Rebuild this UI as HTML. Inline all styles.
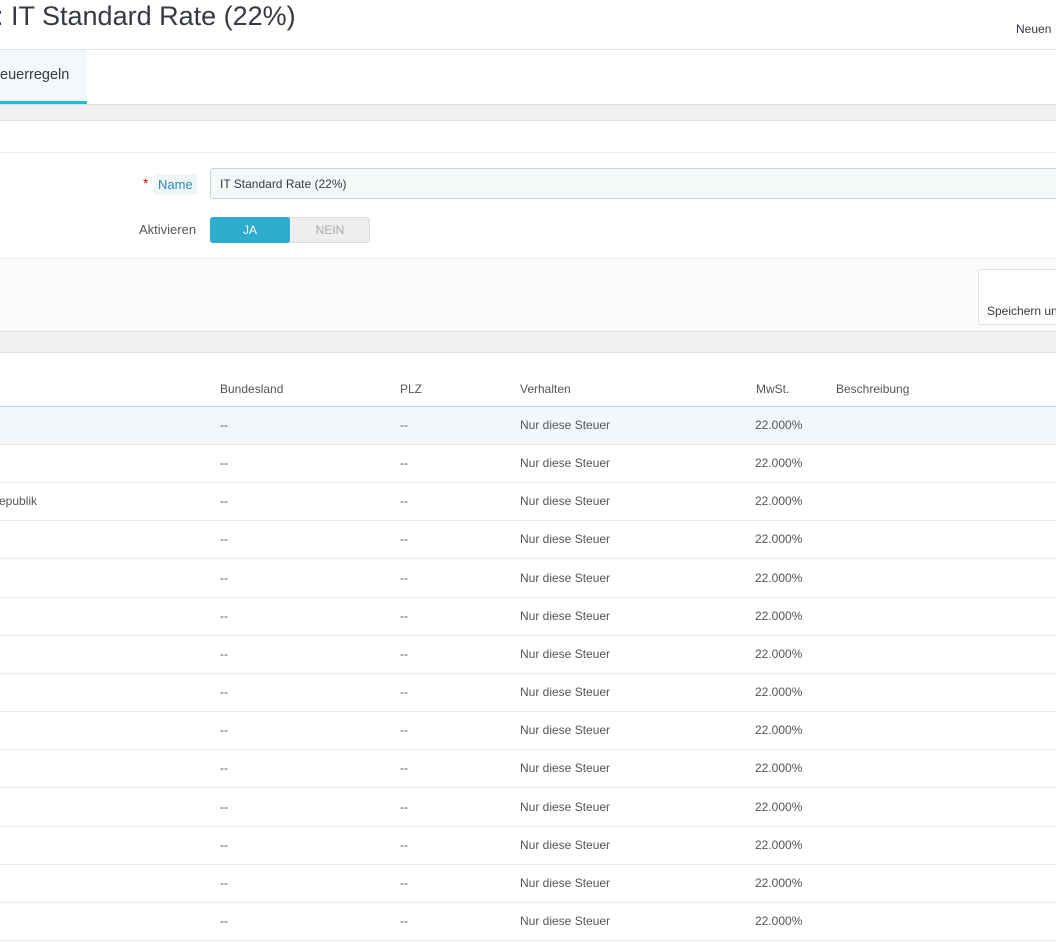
<!DOCTYPE html>
<html><head><meta charset="utf-8"><style>
*{margin:0;padding:0;box-sizing:border-box}
html,body{width:1056px;height:948px;overflow:hidden}
body{background:#fff;font-family:"Liberation Sans",sans-serif;color:#555;position:relative}
.a{position:absolute;white-space:nowrap}
.t{font-size:12px;color:#555}
.r{position:absolute;left:0;width:1056px;height:38px;border-bottom:1px solid #e8eaeb}
.r span{position:absolute;top:11px;font-size:12px;color:#555;white-space:nowrap}
.c1{left:220px}.c2{left:400px}.c3{left:520px}.c4{left:755px}
</style></head><body>
<div class="a" style="left:-4px;top:0px;font-size:27px;color:#363a41;line-height:32px">: IT Standard Rate (22%)</div>
<div class="a" style="left:1016px;top:22px;width:38px;overflow:hidden;font-size:12px;color:#363a41">Neuen Steuerregel</div>
<div class="a" style="left:0;top:49px;width:1056px;height:1px;background:#dfe3e6"></div>
<div class="a" style="left:0;top:50px;width:87px;height:54px;background:#f4f8fb;border-bottom:3px solid #25b9d7;overflow:hidden"><div class="a" style="left:0px;top:17px;font-size:14.5px;color:#363a41">euerregeln</div></div>
<div class="a" style="left:0;top:104px;width:1056px;height:17px;background:#eff1f2;border-top:1px solid #dcdfe1;border-bottom:1px solid #dcdfe1"></div>
<div class="a" style="left:0;top:152px;width:1056px;height:1px;background:#eceeef"></div>
<div class="a" style="left:143px;top:175px;color:#e3141c;font-size:14px">*</div>
<div class="a" style="left:154px;top:174px;height:21px;padding:3px 4px;background:#eef6fa;color:#2a8bb3;font-size:13px">Name</div>
<div class="a" style="left:210px;top:168px;width:860px;height:31px;background:#f5f8f9;border:1px solid #c7d6db;border-radius:3px;padding:8px 9px;font-size:12px;color:#363a41">IT Standard Rate (22%)</div>
<div class="a" style="left:139px;top:222px;font-size:13px;color:#555">Aktivieren</div>
<div class="a" style="left:210px;top:217px;width:160px;height:26px;border-radius:3px;background:#eee;border:1px solid #ddd"></div>
<div class="a" style="left:210px;top:217px;width:80px;height:26px;border-radius:3px;background:#2eacce;color:#fff;font-size:12px;text-align:center;line-height:26px">JA</div>
<div class="a" style="left:290px;top:217px;width:80px;height:26px;color:#aaa;font-size:12px;text-align:center;line-height:26px">NEIN</div>
<div class="a" style="left:0;top:258px;width:1056px;height:74px;background:#fafbfc;border-top:1px solid #eceeef"></div>
<div class="a" style="left:978px;top:269px;width:78px;height:56px;background:#fff;border:1px solid #dfe3e6;border-right:none;border-radius:3px 0 0 3px;overflow:hidden"><div class="a" style="left:8px;top:34px;font-size:12px;color:#363a41">Speichern und bleiben</div></div>
<div class="a" style="left:0;top:331px;width:1056px;height:22px;background:#eff1f2;border-top:1px solid #dcdfe1;border-bottom:1px solid #dcdfe1"></div>
<div class="a t" style="left:220px;top:382px">Bundesland</div>
<div class="a t" style="left:400px;top:382px">PLZ</div>
<div class="a t" style="left:520px;top:382px">Verhalten</div>
<div class="a t" style="left:756px;top:382px">MwSt.</div>
<div class="a t" style="left:836px;top:382px">Beschreibung</div>
<div class="a" style="left:0;top:406px;width:1056px;height:1px;background:#a7d8ec"></div>
<div class="r" style="top:407px;background:#f3f7f9"><span class="c1">--</span><span class="c2">--</span><span class="c3">Nur diese Steuer</span><span class="c4">22.000%</span></div>
<div class="r" style="top:445px"><span class="c1">--</span><span class="c2">--</span><span class="c3">Nur diese Steuer</span><span class="c4">22.000%</span></div>
<div class="r" style="top:483px"><span style="left:-1px">epublik</span><span class="c1">--</span><span class="c2">--</span><span class="c3">Nur diese Steuer</span><span class="c4">22.000%</span></div>
<div class="r" style="top:521px"><span class="c1">--</span><span class="c2">--</span><span class="c3">Nur diese Steuer</span><span class="c4">22.000%</span></div>
<div class="r" style="top:560px"><span class="c1">--</span><span class="c2">--</span><span class="c3">Nur diese Steuer</span><span class="c4">22.000%</span></div>
<div class="r" style="top:598px"><span class="c1">--</span><span class="c2">--</span><span class="c3">Nur diese Steuer</span><span class="c4">22.000%</span></div>
<div class="r" style="top:636px"><span class="c1">--</span><span class="c2">--</span><span class="c3">Nur diese Steuer</span><span class="c4">22.000%</span></div>
<div class="r" style="top:674px"><span class="c1">--</span><span class="c2">--</span><span class="c3">Nur diese Steuer</span><span class="c4">22.000%</span></div>
<div class="r" style="top:712px"><span class="c1">--</span><span class="c2">--</span><span class="c3">Nur diese Steuer</span><span class="c4">22.000%</span></div>
<div class="r" style="top:750px"><span class="c1">--</span><span class="c2">--</span><span class="c3">Nur diese Steuer</span><span class="c4">22.000%</span></div>
<div class="r" style="top:789px"><span class="c1">--</span><span class="c2">--</span><span class="c3">Nur diese Steuer</span><span class="c4">22.000%</span></div>
<div class="r" style="top:827px"><span class="c1">--</span><span class="c2">--</span><span class="c3">Nur diese Steuer</span><span class="c4">22.000%</span></div>
<div class="r" style="top:865px"><span class="c1">--</span><span class="c2">--</span><span class="c3">Nur diese Steuer</span><span class="c4">22.000%</span></div>
<div class="r" style="top:903px"><span class="c1">--</span><span class="c2">--</span><span class="c3">Nur diese Steuer</span><span class="c4">22.000%</span></div>
</body></html>
